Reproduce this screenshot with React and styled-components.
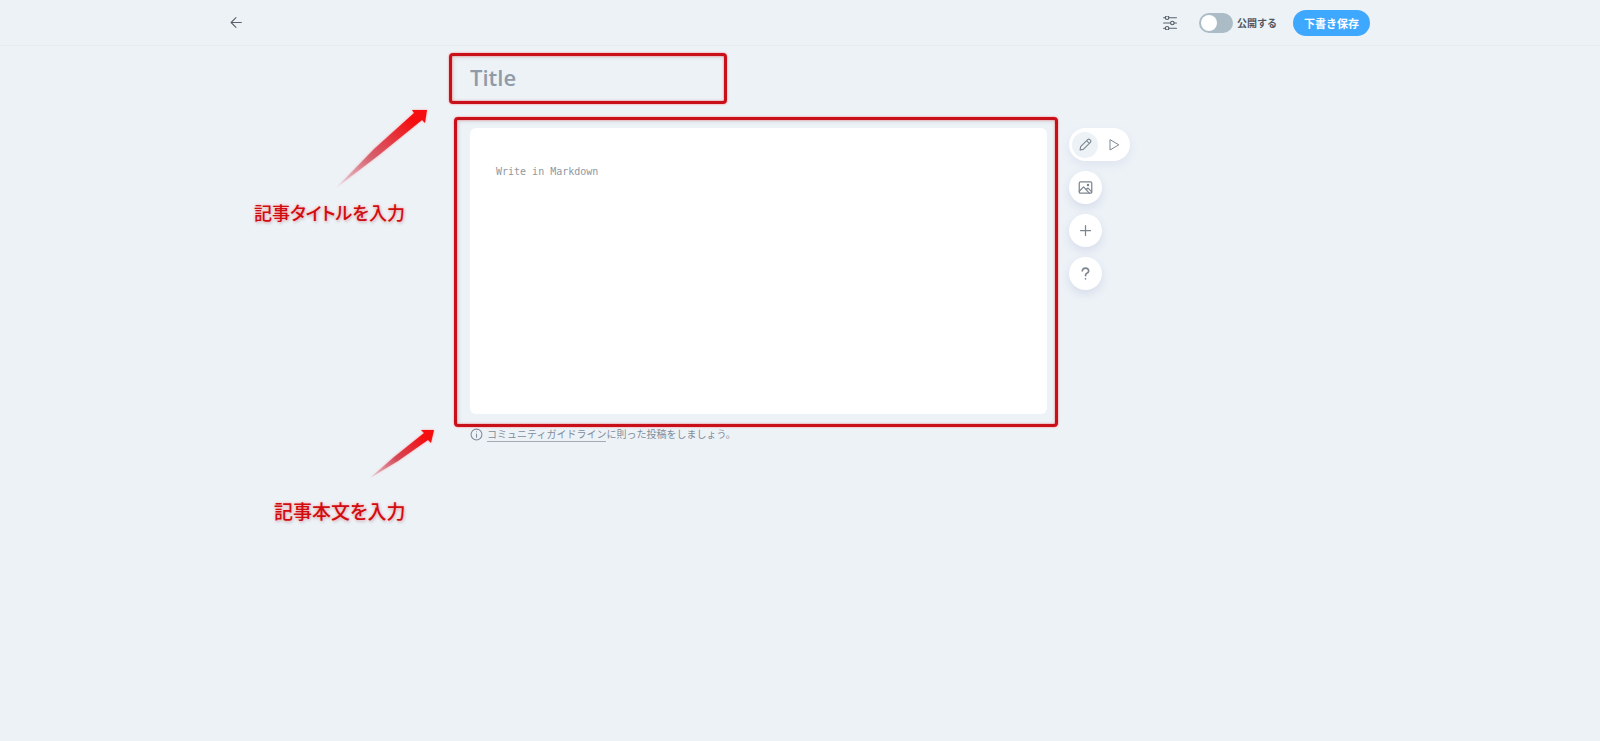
import React from 'react';
import styled, { createGlobalStyle } from 'styled-components';

const GlobalStyle = createGlobalStyle`
  *, *::before, *::after {
    box-sizing: border-box;
  }
  body {
    margin: 0;
    background: #edf2f7;
    color: #4d5864;
    font-family: "Open Sans", "Noto Sans CJK JP", sans-serif;
  }
  button, input, textarea {
    font-family: inherit;
  }
  svg {
    display: block;
  }
`;

const Page = styled.div`
  min-height: 100vh;
`;

const Header = styled.header`
  border-bottom: 1px solid #e6ebf0;
`;

const HeaderInner = styled.div`
  display: flex;
  align-items: center;
  max-width: 1140px;
  height: 45px;
  margin: 0 auto;
`;

const IconLink = styled.a`
  color: #59636e;
`;

const IconButton = styled.button`
  padding: 0;
  border: 0;
  background: none;
  color: #59636e;
`;

const Actions = styled.div`
  display: flex;
  align-items: center;
  margin-left: auto;
`;

const Publish = styled.label`
  display: flex;
  align-items: center;
  gap: 4px;
  margin: 0 16px 0 22px;
  font-size: 10px;
  font-weight: 600;
  line-height: 20px;
`;

const Switch = styled.input`
  appearance: none;
  width: 34px;
  height: 20px;
  margin: 0;
  padding: 2px;
  border-radius: 10px;
  background: #acbcc7;
  &::before {
    content: "";
    display: block;
    width: 16px;
    height: 16px;
    border-radius: 50%;
    background: #fff;
  }
  &:checked::before {
    margin-left: auto;
  }
`;

const SaveButton = styled.button`
  height: 26px;
  padding: 0 11px;
  border: 0;
  border-radius: 13px;
  background: #3ea8ff;
  color: #fff;
  font-size: 11px;
  font-weight: 700;
`;

const Main = styled.main`
  position: relative;
  max-width: 660px;
  margin: 0 auto;
  padding-top: 14px;
`;

const TitleField = styled.div`
  position: relative;
  margin-bottom: 34px;
`;

const TitleInput = styled.input`
  display: block;
  width: 100%;
  height: 34px;
  padding: 0;
  border: 0;
  outline: 0;
  background: none;
  font-size: 22px;
  font-weight: 600;
  &::placeholder {
    color: #8f9ba6;
    opacity: 1;
  }
`;

const Editor = styled.div`
  display: flex;
  align-items: flex-start;
  gap: 22px;
`;

const BodyField = styled.div`
  position: relative;
  flex: 1;
`;

const BodyInput = styled.textarea`
  display: block;
  width: 100%;
  height: 286px;
  padding: 36px 26px;
  border: 0;
  border-radius: 6px;
  outline: 0;
  resize: none;
  background: #fff;
  font-family: "DejaVu Sans Mono", monospace;
  font-size: 10px;
  line-height: 16px;
  &::placeholder {
    color: #8f979f;
    opacity: 1;
  }
`;

const Tools = styled.aside`
  display: flex;
  flex-direction: column;
  align-items: flex-start;
  gap: 10px;
`;

const Modes = styled.div`
  display: flex;
  align-items: center;
  gap: 3px;
  height: 33px;
  padding: 3px;
  border-radius: 17px;
  background: #fff;
  box-shadow: 0 4px 10px #dfe4f0;
`;

const ModeButton = styled.button`
  display: grid;
  place-items: center;
  width: 26px;
  height: 26px;
  padding: 0;
  border: 0;
  border-radius: 50%;
  background: ${({ $active }) => ($active ? '#edf2f7' : 'none')};
  color: #7d868f;
`;

const RoundButton = styled.button`
  display: grid;
  place-items: center;
  width: 33px;
  height: 33px;
  padding: 0;
  border: 0;
  border-radius: 50%;
  background: #fff;
  box-shadow: 0 4px 10px #d6dcea;
  color: #7d868f;
`;

const Guideline = styled.p`
  display: flex;
  align-items: center;
  gap: 4px;
  margin: 13px 0 0;
  color: #828d99;
  font-size: 10px;
  line-height: 15px;
  a {
    border-bottom: 1px solid #a3acb6;
    color: inherit;
    text-decoration: none;
  }
`;

/* red marks that lie over the editor */
const Frame = styled.div`
  position: absolute;
  border: 3px solid #c8101a;
  border-radius: 4px;
  box-shadow: 0 0 2px #ff6a6a, inset 0 0 2px #ff6a6a, inset 1px 1px 4px #cfd2d6;
  pointer-events: none;
`;

const TitleFrame = styled(Frame)`
  top: -7px;
  left: -21px;
  width: 278px;
  height: 51px;
`;

const BodyFrame = styled(Frame)`
  inset: -11px -11px -13px -16px;
`;

const Arrow = styled.svg`
  position: absolute;
  top: ${({ $top }) => $top}px;
  left: ${({ $left }) => $left}px;
  overflow: visible;
  filter: drop-shadow(0 0 1px #ff9a9a);
`;

const Note = styled.span`
  position: absolute;
  top: ${({ $top }) => $top}px;
  left: ${({ $left }) => $left}px;
  color: #cf0c10;
  font-family: "Noto Sans CJK JP", sans-serif;
  font-size: ${({ $size }) => $size}px;
  font-weight: 500;
  font-feature-settings: "palt";
  line-height: 28px;
  white-space: nowrap;
  text-shadow: 0 0 3px #ff9f9f, 1px 2px 3px #c9ced4;
`;

const Icon = ({ size, children, width = 2 }) => (
  <svg
    width={size}
    height={size}
    viewBox="0 0 24 24"
    fill="none"
    stroke="currentColor"
    strokeWidth={width}
    strokeLinecap="round"
    strokeLinejoin="round"
    aria-hidden="true"
  >
    {children}
  </svg>
);

const BackIcon = () => (
  <Icon size={13}>
    <path d="M21 12H2M11 3l-9 9 9 9" />
  </Icon>
);

const SettingsIcon = () => (
  <Icon size={14}>
    <path d="M1 3h3M10 3h13M1 12h12M19 12h4M1 21h3M10 21h13" />
    <circle cx="7" cy="3" r="3" />
    <circle cx="16" cy="12" r="3" />
    <circle cx="7" cy="21" r="3" />
  </Icon>
);

const PencilIcon = () => (
  <Icon size={13}>
    <path d="M2 22l1-6L16 3q2-2 4 0l1 1q2 2 0 4L8 21zM14 5l5 5" />
  </Icon>
);

const PlayIcon = () => (
  <Icon size={12}>
    <path d="M4 2v20l17-10z" />
  </Icon>
);

const ImageIcon = () => (
  <Icon size={15}>
    <rect x="2" y="3" width="20" height="18" rx="2" />
    <path d="M2 18l7-7 9 10M13 15l3-2 6 6" />
    <circle cx="16" cy="8" r="1" />
  </Icon>
);

const PlusIcon = () => (
  <Icon size={15}>
    <path d="M12 4v16M4 12h16" />
  </Icon>
);

const HelpIcon = () => (
  <Icon size={13} width={3}>
    <path d="M6 7q1-5 6-5t6 5q0 3-4 5-2 1-2 4M12 22v0" />
  </Icon>
);

const InfoIcon = () => (
  <Icon size={13}>
    <circle cx="12" cy="12" r="10" />
    <path d="M12 11v6M12 7v0" />
  </Icon>
);

const App = () => (
  <Page>
    <GlobalStyle />
    <Header>
      <HeaderInner>
        <IconLink href="#back" aria-label="戻る">
          <BackIcon />
        </IconLink>
        <Actions>
          <IconButton type="button" aria-label="設定">
            <SettingsIcon />
          </IconButton>
          <Publish>
            <Switch type="checkbox" role="switch" />
            公開する
          </Publish>
          <SaveButton type="button">下書き保存</SaveButton>
        </Actions>
      </HeaderInner>
    </Header>
    <Main>
      <TitleField>
        <TitleInput placeholder="Title" aria-label="Title" />
        <TitleFrame />
      </TitleField>
      <Editor>
        <BodyField>
          <BodyInput placeholder="Write in Markdown" aria-label="Markdown" />
          <BodyFrame />
        </BodyField>
        <Tools>
          <Modes>
            <ModeButton type="button" $active aria-label="編集">
              <PencilIcon />
            </ModeButton>
            <ModeButton type="button" aria-label="プレビュー">
              <PlayIcon />
            </ModeButton>
          </Modes>
          <RoundButton type="button" aria-label="画像">
            <ImageIcon />
          </RoundButton>
          <RoundButton type="button" aria-label="追加">
            <PlusIcon />
          </RoundButton>
          <RoundButton type="button" aria-label="ヘルプ">
            <HelpIcon />
          </RoundButton>
        </Tools>
      </Editor>
      <Guideline>
        <InfoIcon />
        <span>
          <a href="#guideline">コミュニティガイドライン</a>
          に則った投稿をしましょう。
        </span>
      </Guideline>

      <Arrow $top={63} $left={-134} width="92" height="80" viewBox="0 0 92 80">
        <defs>
          <linearGradient id="fadeTitle" x1="0" y1="1" x2="1" y2="0">
            <stop offset="0" stopColor="#c56a80" stopOpacity="0.1" />
            <stop offset="0.4" stopColor="#cf5060" stopOpacity="0.85" />
            <stop offset="0.85" stopColor="#f50d10" />
          </linearGradient>
        </defs>
        <path d="M0 79L38 40 78 4 76 1 91 1 89 14 86 11 43 46z" fill="url(#fadeTitle)" />
      </Arrow>
      <Note $top={152} $left={-216} $size={18}>記事タイトルを入力</Note>

      <Arrow $top={383} $left={-100} width="64" height="50" viewBox="0 0 64 50">
        <defs>
          <linearGradient id="fadeBody" x1="0" y1="1" x2="1" y2="0">
            <stop offset="0" stopColor="#c56a80" stopOpacity="0.2" />
            <stop offset="0.4" stopColor="#cf4050" stopOpacity="0.9" />
            <stop offset="0.85" stopColor="#f50d10" />
          </linearGradient>
        </defs>
        <path d="M0 49L24 28 54 4 51 1 64 1 61 14 58 11 28 32z" fill="url(#fadeBody)" />
      </Arrow>
      <Note $top={451} $left={-196} $size={19}>記事本文を入力</Note>
    </Main>
  </Page>
);

export default App;
